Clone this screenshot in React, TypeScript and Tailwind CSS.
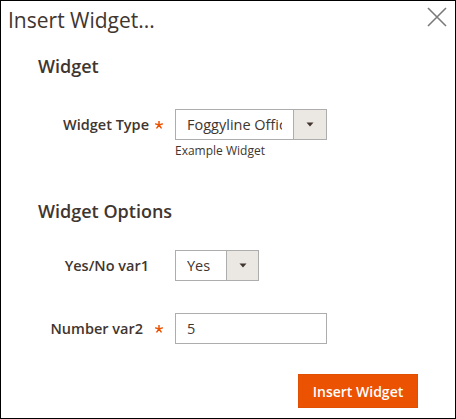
const Asterisk = () => (
  <span className="flex w-[25px] shrink-0 pl-[5px] pt-[1px]">
    <svg width="8" height="8" viewBox="0 0 8 8" className="block">
      <path
        d="M4 4 L4 0.4 M4 4 L7.4 2.9 M4 4 L6.1 6.9 M4 4 L1.9 6.9 M4 4 L0.6 2.9"
        stroke="#eb5202"
        strokeWidth="1.5"
        strokeLinecap="round"
      />
    </svg>
  </span>
);

const Arrow = () => (
  <svg width="8" height="5" viewBox="0 0 8 5" className="block">
    <path d="M0.5 0.5 L7.5 0.5 L4 4.5 Z" fill="#41362f" />
  </svg>
);

const SelectBox = ({ value, width, buttonWidth }: { value: string; width: string; buttonWidth: string }) => (
  <div className={`flex h-[31px] border border-[#adadad] bg-white ${width}`}>
    <div className="ml-[11px] mr-[11px] flex min-w-0 flex-1 items-center overflow-hidden whitespace-nowrap text-[14.5px]">
      {value}
    </div>
    <div className={`flex shrink-0 items-center justify-center border-l border-[#adadad] bg-[#ebe7e3] ${buttonWidth}`}>
      <Arrow />
    </div>
  </div>
);

const Label = ({ children, required, pr = 'pr-[1px]' }: { children: string; required?: boolean; pr?: string }) => (
  <>
    <div className={`w-[112px] shrink-0 text-right text-[14.5px] font-semibold ${pr}`}>{children}</div>
    {required ? <Asterisk /> : <span className="w-[25px] shrink-0" />}
  </>
);

export default function App() {
  return (
    <div
      className="flex h-[419px] w-[456px] flex-col border border-black bg-white text-[#41362f]"
      style={{ fontFamily: '"Open Sans", "Liberation Sans", sans-serif' }}
    >
      <div className="mt-[5px] flex items-start justify-between pl-[7px] pr-[8px]">
        <h1 className="text-[21px] leading-[28px] font-normal">Insert Widget...</h1>
        <button className="mt-[1px] text-[#7a7a7a]">
          <svg width="20" height="20" viewBox="0 0 20 20" className="block">
            <path d="M1 1 L19 19 M19 1 L1 19" stroke="currentColor" strokeWidth="1.6" />
          </svg>
        </button>
      </div>

      <div className="flex flex-col pl-[37px] pr-[37px]">
        <h2 className="mt-[20px] text-[18px] leading-[24px] font-semibold">Widget</h2>

        <div className="mt-[31px] flex items-start">
          <div className="flex h-[31px] items-center">
            <Label required pr="pr-[1px]">Widget Type</Label>
          </div>
          <div className="flex flex-col">
            <SelectBox value="Foggyline Office" width="w-[152px]" buttonWidth="w-[33px]" />
            <p className="mt-[3px] text-[12px] leading-[16px]">Example Widget</p>
          </div>
        </div>

        <h2 className="mt-[40px] text-[18px] leading-[24px] font-semibold">Widget Options</h2>

        <div className="mt-[27px] flex items-center">
          <Label>Yes/No var1</Label>
          <SelectBox value="Yes" width="w-[84px]" buttonWidth="w-[32px]" />
        </div>

        <div className="mt-[32px] flex items-center">
          <Label required pr="pr-[7px]">Number var2</Label>
          <div className="flex h-[31px] w-[152px] items-center border border-[#adadad] bg-white pl-[11px] text-[14.5px]">
            5
          </div>
        </div>

        <div className="mt-[30px] flex justify-end">
          <button className="h-[34px] w-[120px] border border-[#e04f02] bg-[#eb5202] text-[14px] font-semibold text-white">
            Insert Widget
          </button>
        </div>
      </div>
    </div>
  );
}
